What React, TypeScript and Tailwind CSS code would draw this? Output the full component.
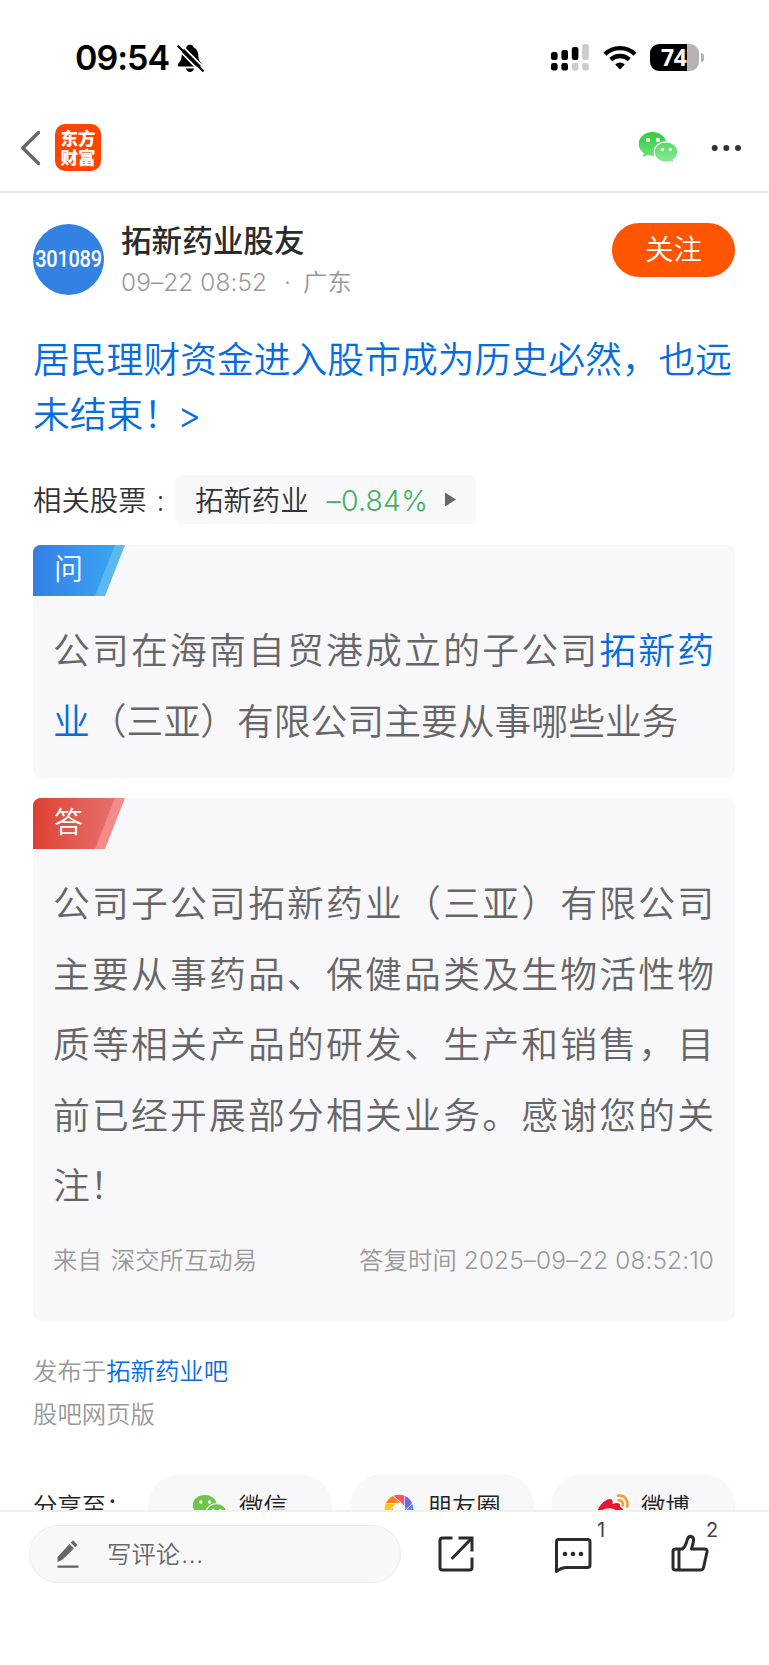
import type { ReactNode } from "react";

const questionText = "公司在海南自贸港成立的子公司";
const answerText =
  "公司子公司拓新药业（三亚）有限公司主要从事药品、保健品类及生物活性物质等相关产品的研发、生产和销售，目前已经开展部分相关业务。感谢您的关注！";

function StatusBar() {
  return (
    <div className="flex h-[102px] items-start justify-between pt-[37px] pr-[65px] pl-[75px] text-black">
      <div className="flex items-center">
        <span className="w-[102px] text-[34px] leading-[41px] font-semibold tracking-[-1px] whitespace-nowrap">09:54</span>
        <svg width="27" height="29" viewBox="0 0 27 29" className="mt-[1px]">
          <path
            d="M13 0.8C11 0.8 9.6 2 9.3 3.6C7.5 4.3 6 5.8 5.2 7.8L4.6 12.5C4.4 16 3.2 17.5 1.5 19.5C0.3 21 0.6 22.4 2 22.4H24C25.5 22.4 25.8 21 24.7 19.7C22.8 17.5 21.6 16 21.4 12.5C21.2 8 20 5 16.7 3.6C16.4 2 15 0.8 13 0.8Z"
            fill="#000"
          />
          <path d="M9 24.5H17C16.5 26.7 15 28 13 28C11 28 9.5 26.7 9 24.5Z" fill="#000" />
          <path d="M-0.5 3.8L24.5 29" stroke="#fff" strokeWidth="1.8" />
          <path d="M3 -0.5L28 24.8" stroke="#fff" strokeWidth="1.8" />
          <path d="M1.2 2.2L25.8 26.8" stroke="#000" strokeWidth="2.2" strokeLinecap="round" />
        </svg>
      </div>
      <div className="mt-[6px] flex items-center">
        <svg width="38" height="28" viewBox="0 0 38 28">
          <g fill="#000">
            <rect x="0" y="9" width="6.6" height="8" rx="2.2" />
            <rect x="10.4" y="7" width="6.6" height="10" rx="2.2" />
            <rect x="20.8" y="4" width="6.6" height="13" rx="2.2" />
            <rect x="0" y="20" width="6.6" height="7.4" rx="2.2" />
            <rect x="10.4" y="20" width="6.6" height="7.4" rx="2.2" />
          </g>
          <g fill="#cbcbcb">
            <rect x="31.2" y="1" width="6.6" height="16" rx="2.2" />
            <rect x="20.8" y="20" width="6.6" height="7.4" rx="2.2" />
            <rect x="31.2" y="20" width="6.6" height="7.4" rx="2.2" />
          </g>
        </svg>
        <svg width="34" height="25" viewBox="0 0 34 25" className="ml-[14px]" fill="none" stroke="#000" strokeWidth="4.4">
          <path d="M2 9.2A21.6 21.6 0 0 1 32 9.2" />
          <path d="M7.7 14.7A13.6 13.6 0 0 1 26.3 14.7" />
          <path d="M17 24.5L12.2 19.5A7 7 0 0 1 21.8 19.5Z" fill="#000" stroke="none" />
        </svg>
        <div className="ml-[13px] flex h-[27px] w-[49px] items-center rounded-[9px] bg-[linear-gradient(90deg,#000_37px,#b3b3b3_37px)]">
          <span className="pl-[11px] font-['Open_Sans','Noto_Sans',sans-serif] text-[23px] leading-[27px] font-bold tracking-[-0.5px] text-white">74</span>
        </div>
        <div className="ml-[2px] h-[9px] w-[3px] rounded-r-full bg-[#b3b3b3]" />
      </div>
    </div>
  );
}

function WechatBubbles() {
  return (
    <svg width="41" height="34" viewBox="0 0 41 34">
      <defs>
        <linearGradient id="bubbleBig" x1="0" y1="0" x2="0" y2="1">
          <stop offset="0" stopColor="#2fce3c" />
          <stop offset="1" stopColor="#6fde7c" />
        </linearGradient>
        <linearGradient id="bubbleSmall" x1="0" y1="0" x2="0" y2="1">
          <stop offset="0" stopColor="#5bd968" />
          <stop offset="1" stopColor="#8be994" />
        </linearGradient>
      </defs>
      <path
        d="M14.500 1C6.700 1 0.700 6.200 0.700 13C0.700 16.800 2.600 19.900 5.800 22.200L4.900 26L9.800 23.900C11.200 24.400 12.800 24.700 14.500 24.700C22.200 24.700 28.500 19.500 28.500 13C28.500 6.200 22.200 1 14.500 1Z"
        fill="url(#bubbleBig)"
      />
      <path
        d="M28 10.800C21.300 10.800 16.200 15.300 16.200 21C16.200 26.700 21.300 31.200 28 31.200C29.600 31.200 31 31 32.400 30.500L36.200 32.300L35.400 29C38.200 27.100 39.800 24.200 39.800 21C39.800 15.300 34.700 10.800 28 10.800Z"
        fill="url(#bubbleSmall)"
        stroke="#fff"
        strokeWidth="1.2"
      />
      <g fill="#fff">
        <circle cx="10" cy="9" r="2.2" />
        <circle cx="20" cy="9" r="2.2" />
        <circle cx="24.400" cy="18.400" r="1.600" />
        <circle cx="32.200" cy="18.400" r="1.600" />
      </g>
    </svg>
  );
}

function NavHeader() {
  return (
    <header className="flex h-[91px] items-center justify-between border-b-2 border-[#ececec] pt-[2px] pr-[26px] pl-[20px]">
      <div className="flex items-center">
        <svg width="21" height="36" viewBox="0 0 21 36" className="mt-px" fill="none" stroke="#666" strokeWidth="3.4" strokeLinecap="round" strokeLinejoin="round">
          <path d="M18.500 2.500L2.800 18L18.500 33.500" />
        </svg>
        <div className="ml-[14px] flex h-[47px] w-[46px] flex-col items-center justify-center rounded-[10px] bg-[#ff4400] text-[17.500px] leading-[19px] font-black text-white">
          <span>东方</span>
          <span>财富</span>
        </div>
      </div>
      <div className="flex items-center">
        <WechatBubbles />
        <svg width="32" height="8" viewBox="0 0 32 8" className="ml-[32px]" fill="#333">
          <circle cx="3.700" cy="4" r="3" />
          <circle cx="15.300" cy="4" r="3" />
          <circle cx="27" cy="4" r="3" />
        </svg>
      </div>
    </header>
  );
}

function AuthorRow() {
  return (
    <div className="flex h-[71px] items-start">
      <div className="flex h-[71px] w-[71px] items-center justify-center rounded-full bg-[#3381e3] font-['Roboto',sans-serif] text-[20px] font-medium text-white">
        <span className="-mt-[2px] scale-y-115 tracking-[-0.3px]">301089</span>
      </div>
      <div className="ml-[17px] flex-1">
        <div className="-mt-px text-[30.600px] leading-[36px] font-medium text-[#2b2b2b]">拓新药业股友</div>
        <div className="mt-[5px] flex text-[24.400px] leading-[36px] whitespace-pre text-[#999]">
          <span className="w-[163px] tracking-[0.1px]">09–22 08:52</span>
          <span className="w-[19px]">·</span>
          <span>广东</span>
        </div>
      </div>
      <button className="-mt-px h-[54px] w-[123px] rounded-full bg-[#ff5500] pb-[2px] text-[28.500px] leading-[51px] font-[350] text-white">关注</button>
    </div>
  );
}

type QaCardProps = {
  label: string;
  kind: "ask" | "answer";
  className: string;
  children: ReactNode;
};

function QaCard({ label, kind, className, children }: QaCardProps) {
  const ask = kind === "ask";
  return (
    <section className={`overflow-hidden rounded-[8px] bg-[#f8f8fb] ${className}`}>
      <div
        className={`h-[51px] w-[92px] [clip-path:polygon(0_0,100%_0,72px_100%,0_100%)] ${ask ? "bg-[#5cb8f0]" : "bg-[#f58a8a]"}`}
      >
        <div
          className={`h-full w-[82px] bg-linear-to-r pl-[21px] text-[29px] leading-[50px] text-white [clip-path:polygon(0_0,100%_0,62px_100%,0_100%)] ${
            ask ? "from-[#337fe3] to-[#3ba5f1]" : "from-[#dd3f31] to-[#e7706c]"
          }`}
        >
          {label}
        </div>
      </div>
      <div className="pr-[21px] pl-[20px]">{children}</div>
    </section>
  );
}

function WechatSmall() {
  return (
    <svg width="36" height="30" viewBox="0 0 41 34" className="mt-[5px]">
      <path
        d="M14.500 1C6.700 1 1 6.200 1 12.600C1 16.200 2.800 19.300 5.800 21.400L4.900 25.500L9.600 23.200C11.200 23.700 12.800 24 14.500 24C22.200 24 28.300 19 28.300 12.600C28.300 6.200 22.200 1 14.500 1Z"
        fill="#6cc746"
      />
      <path
        d="M28 10.800C21.300 10.800 16.200 15.300 16.200 21C16.200 26.700 21.300 31.200 28 31.200C29.600 31.200 31 31 32.400 30.500L36.200 32.300L35.400 29C38.200 27.100 39.800 24.200 39.800 21C39.800 15.300 34.700 10.800 28 10.800Z"
        fill="#6cc746"
        stroke="#f8f8fb"
        strokeWidth="1.500"
      />
      <g fill="#fff">
        <circle cx="10" cy="9" r="2" />
        <circle cx="20" cy="9" r="2" />
        <circle cx="24" cy="18.400" r="1.600" />
        <circle cx="32.200" cy="18.400" r="1.600" />
      </g>
    </svg>
  );
}

// Eight shutter blades around a small open centre
function MomentsIcon() {
  const colors = ["#f9545b", "#6a67f0", "#4f8df5", "#3fc1f0", "#3ec98a", "#8bd14a", "#fcc80f", "#ff7d1a"];
  return (
    <svg width="34" height="30" viewBox="-17 -15 34 30" className="mt-[5px]">
      {colors.map((color, i) => (
        <path key={color} d="M-5.300 -13.300Q0 -15.300 5 -13.500L5.300 -3.500Z" fill={color} transform={`rotate(${i * 45})`} />
      ))}
    </svg>
  );
}

function WeiboIcon() {
  return (
    <svg width="34" height="30" viewBox="0 0 34 30" className="mt-[5px]">
      <path d="M1 20C1 13 9 5 14 5C17 5 17 8 16.500 10C21 8 25 8.500 24 13C27 14 28 16 28 19C28 25 20 29 13 29C6 29 1 25 1 20Z" fill="#e6162d" />
      <ellipse cx="13" cy="20.500" rx="9.500" ry="6.300" fill="#fff" />
      <circle cx="12.500" cy="20.500" r="4.800" fill="#222" />
      <g fill="none" stroke="#ff9933" strokeWidth="2.600" strokeLinecap="round">
        <path d="M22 1.700C28 0.700 33 6 31 12.500" />
        <path d="M22.500 6.300C25.500 5.800 27.700 8.500 26.800 11.200" />
      </g>
    </svg>
  );
}

const shareTargets = [
  { name: "微信", icon: <WechatSmall /> },
  { name: "朋友圈", icon: <MomentsIcon /> },
  { name: "微博", icon: <WeiboIcon /> },
];

function ShareRow() {
  return (
    <div className="mt-[38px] flex h-[64px] items-center text-[24.400px] text-[#222]">
      <span className="w-[115px] shrink-0 whitespace-nowrap">分享至：</span>
      <div className="flex flex-1 gap-[17.500px]">
        {shareTargets.map((target) => (
          <div key={target.name} className="flex h-[64px] flex-1 items-center justify-center gap-[11px] rounded-full bg-[#f8f8fb] whitespace-nowrap">
            {target.icon}
            {target.name}
          </div>
        ))}
      </div>
    </div>
  );
}

function CommentBar() {
  return (
    <footer className="flex h-[155px] items-start border-t-2 border-[#f0f0f0] pt-[13px] pl-[29px]">
      <div className="flex h-[58px] w-[372px] items-center rounded-full border border-[#ededed] bg-[#f8f8f8] pl-[27px] text-[24.400px] text-[#666]">
        <svg width="22" height="30" viewBox="0 0 22 30" fill="#666">
          <path d="M0.500 23V18L12.500 5L17 9.500L5 21Z" />
          <path d="M13.800 3.800L16 1.300L20.600 5.900L18.200 8.200Z" />
          <rect x="0.500" y="26.500" width="21" height="2.300" />
        </svg>
        <span className="ml-[28px]">写评论<span className="ml-px font-['Inter',sans-serif] tracking-[0.6px]">...</span></span>
      </div>
      <svg width="36" height="36" viewBox="0 0 36 36" className="mt-[11px] ml-[37px]" fill="none" stroke="#2b2b2b" strokeWidth="3">
        <path d="M14.500 2H4.500Q2 2 2 4.500V31.500Q2 34 4.500 34H31.500Q34 34 34 31.500V21.500" />
        <path d="M20.500 2H34V15.500" />
        <path d="M33.500 2.500L14.500 22" strokeLinecap="round" />
      </svg>
      <div className="relative mt-[12px] ml-[80px]">
        <svg width="38" height="37" viewBox="0 0 38 37" fill="none" stroke="#2b2b2b" strokeWidth="3" strokeLinejoin="round">
          <path d="M4.500 2.500H33.500Q36 2.500 36 5V28Q36 30.500 33.500 30.500H13Q7 30.500 2.500 34.500V4.500Q2.500 2.500 4.500 2.500Z" />
          <g fill="#2b2b2b" stroke="none">
            <circle cx="11" cy="17" r="2.300" />
            <circle cx="19" cy="17" r="2.300" />
            <circle cx="27" cy="17" r="2.300" />
          </g>
        </svg>
        <span className="absolute top-[-19px] left-[43px] text-[20px] leading-[24px] font-normal text-[#444]">1</span>
      </div>
      <div className="relative mt-[9px] ml-[79px]">
        <svg width="38" height="38" viewBox="0 0 38 38" fill="none" stroke="#2b2b2b" strokeWidth="3" strokeLinejoin="round">
          <path d="M4.500 15H11.500C15 12 15.500 8 16.500 5C18 0.800 23 2 22.500 6.500C22.300 9.500 21 12 20.500 15H33.500Q36.500 15 36 18L32.500 33.500Q32 36 29.500 36H4.500Q2 36 2 33.500V17.500Q2 15 4.500 15Z" />
          <path d="M8 15V36" />
        </svg>
        <span className="absolute top-[-16px] left-[35px] text-[20px] leading-[24px] font-normal text-[#444]">2</span>
      </div>
    </footer>
  );
}

export default function App() {
  return (
    <div lang="zh-CN" className="flex h-[1665px] w-[769px] flex-col overflow-hidden bg-white font-['Inter','Noto_Sans_CJK_SC',sans-serif] font-[350]">
      <StatusBar />
      <NavHeader />
      <main className="h-[1317px] overflow-hidden pt-[31px] pr-[34px] pl-[33px]">
        <AuthorRow />
        <h1 className="mt-[38px] text-[36.800px] leading-[54.500px] font-[350] text-[#066de0]">
          居民理财资金进入股市成为历史必然，也远未结束！<span className="-ml-[3px]">&gt;</span>
        </h1>
        <div className="mt-[33px] flex h-[49px] items-center text-[28.400px] text-[#333]">
          <span className="mt-[3px] w-[142px] whitespace-nowrap">相关股票<span className="ml-[10px]">:</span></span>
          <div className="flex h-[49px] w-[301px] items-center rounded-[8px] bg-[#f8f8fb] pl-[20px]">
            <span className="mt-[3px]">拓新药业</span>
            <span className="mt-[3px] ml-[18px] w-[101px] tracking-[0.2px] whitespace-nowrap text-[#3db15f]">–0.84%</span>
            <svg width="11" height="15" viewBox="0 0 11 15" className="ml-[17px]" fill="#666">
              <path d="M0 0.500L11 7.500L0 14.500Z" />
            </svg>
          </div>
        </div>

        <QaCard label="问" kind="ask" className="mt-[21px] h-[233px]">
          <p className="mt-[20px] text-justify text-[36.800px] leading-[70.500px] text-[#666]">
            {questionText}
            <span className="text-[#066de0]">拓新药业</span>
            （三亚）有限公司主要从事哪些业务
          </p>
        </QaCard>

        <QaCard label="答" kind="answer" className="mt-[20px] h-[523px]">
          <p className="mt-[20px] text-justify text-[36.800px] leading-[70.500px] text-[#666]">{answerText}</p>
          <div className="mt-[20px] flex justify-between text-[24.400px] leading-[36px] text-[#999]">
            <span>来自<span className="ml-[9px]">深交所互动易</span></span>
            <span className="tracking-[0.100px]">答复时间 2025–09–22 08:52:10</span>
          </div>
        </QaCard>

        <div className="mt-[29px] text-[24.400px] leading-[43px] text-[#999]">
          <div>
            发布于<span className="text-[#066de0]">拓新药业吧</span>
          </div>
          <div>股吧网页版</div>
        </div>
        <ShareRow />
      </main>
      <CommentBar />
    </div>
  );
}
